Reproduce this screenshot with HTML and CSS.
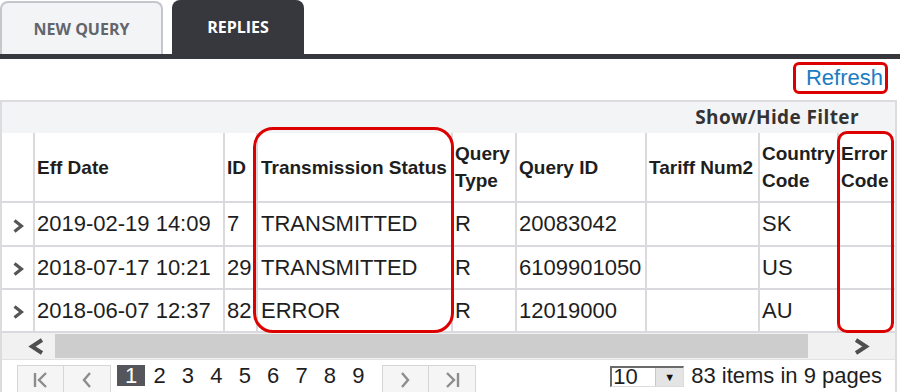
FILE: index.html
```html
<!DOCTYPE html>
<html>
<head>
<meta charset="utf-8">
<title>Replies</title>
<link rel="stylesheet" href="styles.css">
</head>
<body>
<div class="page">
  <div class="tabs">
    <div class="tab tab-idle">NEW QUERY</div>
    <div class="tab tab-active">REPLIES</div>
  </div>
  <div class="actions">
    <a class="refresh">Refresh</a>
  </div>
  <div class="grid">
    <div class="toolbar">Show/Hide Filter</div>
    <div class="grid-body">
      <table class="table">
        <colgroup>
          <col class="c-exp"><col class="c-date"><col class="c-id"><col class="c-ts"><col class="c-qt"><col class="c-qid"><col class="c-tn"><col class="c-cc"><col class="c-ec">
        </colgroup>
        <thead>
          <tr class="head-row">
            <th class="exp"></th>
            <th>Eff Date</th>
            <th>ID</th>
            <th class="ts">Transmission Status</th>
            <th>Query Type</th>
            <th>Query ID</th>
            <th>Tariff Num2</th>
            <th>Country Code</th>
            <th>Error Code</th>
          </tr>
        </thead>
        <tbody>
          <tr class="row row-1">
            <td class="exp"><svg class="chev" width="12" height="14" viewBox="0 0 12 14"><polyline points="2.5,1.5 9.5,7 2.5,12.5" fill="none" stroke="#555" stroke-width="3.2"/></svg></td>
            <td>2019-02-19 14:09</td>
            <td>7</td>
            <td class="ts">TRANSMITTED</td>
            <td>R</td>
            <td>20083042</td>
            <td></td>
            <td>SK</td>
            <td></td>
          </tr>
          <tr class="row">
            <td class="exp"><svg class="chev" width="12" height="14" viewBox="0 0 12 14"><polyline points="2.5,1.5 9.5,7 2.5,12.5" fill="none" stroke="#555" stroke-width="3.2"/></svg></td>
            <td>2018-07-17 10:21</td>
            <td>29</td>
            <td class="ts">TRANSMITTED</td>
            <td>R</td>
            <td>6109901050</td>
            <td></td>
            <td>US</td>
            <td></td>
          </tr>
          <tr class="row">
            <td class="exp"><svg class="chev" width="12" height="14" viewBox="0 0 12 14"><polyline points="2.5,1.5 9.5,7 2.5,12.5" fill="none" stroke="#555" stroke-width="3.2"/></svg></td>
            <td>2018-06-07 12:37</td>
            <td>82</td>
            <td class="ts">ERROR</td>
            <td>R</td>
            <td>12019000</td>
            <td></td>
            <td>AU</td>
            <td></td>
          </tr>
        </tbody>
      </table>
    </div>
    <div class="hscroll">
      <div class="sb-btn sb-left"><svg width="17" height="17" viewBox="0 0 17 17"><polyline points="14,2 4,8.5 14,15" fill="none" stroke="#4f4f4f" stroke-width="4"/></svg></div>
      <div class="sb-track"><div class="sb-thumb"></div></div>
      <div class="sb-btn sb-right"><svg width="17" height="17" viewBox="0 0 17 17"><polyline points="3,2 13,8.5 3,15" fill="none" stroke="#4f4f4f" stroke-width="4"/></svg></div>
    </div>
    <div class="pager">
      <div class="pg-group">
        <span class="pg-btn"><svg width="16" height="16" viewBox="0 0 16 16"><line x1="2" y1="1" x2="2" y2="15" stroke="#8c8c8c" stroke-width="2.4"/><polyline points="13,1 6,8 13,15" fill="none" stroke="#8c8c8c" stroke-width="2.4"/></svg></span>
        <span class="pg-btn"><svg width="16" height="16" viewBox="0 0 16 16"><polyline points="11,1 5,8 11,15" fill="none" stroke="#8c8c8c" stroke-width="2.4"/></svg></span>
      </div>
      <div class="pg-nums">
        <span class="pg-num pg-current">1</span>
        <span class="pg-num">2</span>
        <span class="pg-num">3</span>
        <span class="pg-num">4</span>
        <span class="pg-num">5</span>
        <span class="pg-num">6</span>
        <span class="pg-num">7</span>
        <span class="pg-num">8</span>
        <span class="pg-num">9</span>
      </div>
      <div class="pg-group">
        <span class="pg-btn"><svg width="16" height="16" viewBox="0 0 16 16"><polyline points="5,1 11,8 5,15" fill="none" stroke="#8c8c8c" stroke-width="2.4"/></svg></span>
        <span class="pg-btn"><svg width="16" height="16" viewBox="0 0 16 16"><polyline points="3,1 10,8 3,15" fill="none" stroke="#8c8c8c" stroke-width="2.4"/><line x1="14" y1="1" x2="14" y2="15" stroke="#8c8c8c" stroke-width="2.4"/></svg></span>
      </div>
      <div class="pg-size">
        <span class="select"><span class="select-val">10</span><span class="select-arrow">&#9660;</span></span>
        <span class="pg-info">83 items in 9 pages</span>
      </div>
    </div>
  </div>
  <div class="mark mark-status"></div>
  <div class="mark mark-error"></div>
</div>
</body>
</html>
```
FILE: styles.css
```css
* { box-sizing: border-box; }
html, body { margin: 0; padding: 0; background: #fff; }
body {
  font-family: "Liberation Sans", Arial, sans-serif;
  color: #1e1e1e;
  width: 900px;
  height: 392px;
  overflow: hidden;
}
.page { position: relative; width: 900px; height: 392px; }

/* tabs */
.tabs {
  display: flex;
  align-items: flex-end;
  gap: 9px;
  height: 59px;
  border-bottom: 5px solid #37383d;
}
.tab {
  display: flex;
  align-items: center;
  justify-content: center;
  font-family: "Open Sans", sans-serif;
  font-weight: 700;
  font-size: 16px;
  border-radius: 8px 8px 0 0;
}
.tab-idle {
  width: 163px;
  height: 53px;
  background: #f3f4f6;
  border: 2px solid #c4c6cb;
  border-bottom: none;
  color: #62656c;
}
.tab-active {
  width: 132px;
  height: 54px;
  background: #37383d;
  color: #fff;
}

/* refresh */
.actions {
  display: flex;
  justify-content: flex-end;
  padding: 3px 12px 0 0;
  height: 41px;
}
.refresh {
  display: block;
  height: 32px;
  font-size: 22px;
  line-height: 26px;
  color: #1b7cc1;
  border: 3px solid #dd0000;
  border-radius: 6px;
  padding: 0 2px 0 10px;
}

/* grid */
.grid {
  width: 897px;
  height: 292px;
  border: 2px solid #dcdce0;
  border-bottom: none;
  display: flex;
  flex-direction: column;
}
.toolbar {
  height: 31px;
  background: #f3f4f6;
  font-family: "Open Sans", sans-serif;
  font-weight: 700;
  font-size: 19px;
  letter-spacing: 0.4px;
  line-height: 31px;
  color: #333;
  text-align: right;
  padding-right: 36px;
}
.grid-body { overflow: hidden; width: 893px; }
.table {
  table-layout: fixed;
  width: 918px;
  border-collapse: separate;
  border-spacing: 0;
}
.c-exp { width: 31px; }
.c-date { width: 190px; }
.c-id { width: 33px; }
.c-ts { width: 195px; }
.c-qt { width: 64px; }
.c-qid { width: 130px; }
.c-tn { width: 113px; }
.c-cc { width: 79px; }
.c-ec { width: 83px; }

.table th, .table td {
  border-left: 2px solid #dadade;
  border-bottom: 2px solid #dadade;
  padding: 0 0 0 2px;
  text-align: left;
  vertical-align: middle;
  overflow: hidden;
  white-space: nowrap;
}
.table th.exp, .table td.exp { border-left: none; padding: 0; text-align: center; }
.table th {
  font-size: 19px;
  font-weight: 700;
  line-height: 27px;
  white-space: normal;
  height: 70px;
  color: #1e1e1e;
}
.table td {
  font-size: 22px;
  height: 43px;
  color: #1e1e1e;
}
.table .row-1 td { height: 44px; }
.table .ts { padding-left: 3px; }
.table td.exp { padding-top: 3px; }
.chev { display: inline-block; }

/* scrollbar */
.hscroll {
  display: flex;
  height: 26px;
  background: #f1f1f1;
}
.sb-btn {
  width: 53px;
  display: flex;
  align-items: center;
}
.sb-left { padding-left: 26px; }
.sb-right { padding-left: 12px; margin-left: 33px; }
.sb-track { flex: 0 0 753px; display: flex; align-items: center; }
.sb-thumb { width: 753px; height: 24px; background: #cdcdcd; }

/* pager */
.pager {
  display: flex;
  align-items: flex-start;
  height: 33px;
  border-top: 1px solid #e2e2e2;
  padding: 5px 13px 0 15px;
}
.pg-group { display: flex; }
.pg-btn {
  width: 47px;
  height: 30px;
  background: #f5f5f5;
  border: 1px solid #d6d6d6;
  display: flex;
  align-items: center;
  justify-content: center;
}
.pg-btn + .pg-btn { border-left: none; }
.pg-nums {
  display: flex;
  margin: 0 9px 0 6px;
}
.pg-num {
  width: 28.4px;
  height: 21px;
  font-size: 22px;
  line-height: 22px;
  text-align: center;
  color: #1e1e1e;
}
.pg-current { background: #55565b; color: #fff; width: 28px; margin-right: 0.4px; }
.pg-size {
  margin-left: auto;
  display: flex;
  align-items: center;
  gap: 7px;
}
.select {
  display: flex;
  width: 74px;
  height: 21px;
  border-top: 2px solid #6a6a6a;
  border-left: 2px solid #6a6a6a;
  border-right: 1px solid #dcdcdc;
  border-bottom: 1px solid #dcdcdc;
  background: #fff;
}
.select-val {
  flex: 1;
  font-size: 22px;
  line-height: 18px;
  padding-left: 1px;
}
.select-arrow {
  width: 28px;
  background: #e4e4e4;
  border-left: 1px solid #c8c8c8;
  font-size: 11px;
  line-height: 18px;
  text-align: center;
  color: #111;
}
.pg-info { font-size: 22px; line-height: 22px; color: #1e1e1e; }

/* annotations */
.mark {
  position: absolute;
  border: 3px solid #dd0000;
}
.mark-status { left: 253px; top: 127px; width: 201px; height: 206px; border-radius: 20px; }
.mark-error { left: 837px; top: 131px; width: 57px; height: 202px; border-radius: 10px; }
```
